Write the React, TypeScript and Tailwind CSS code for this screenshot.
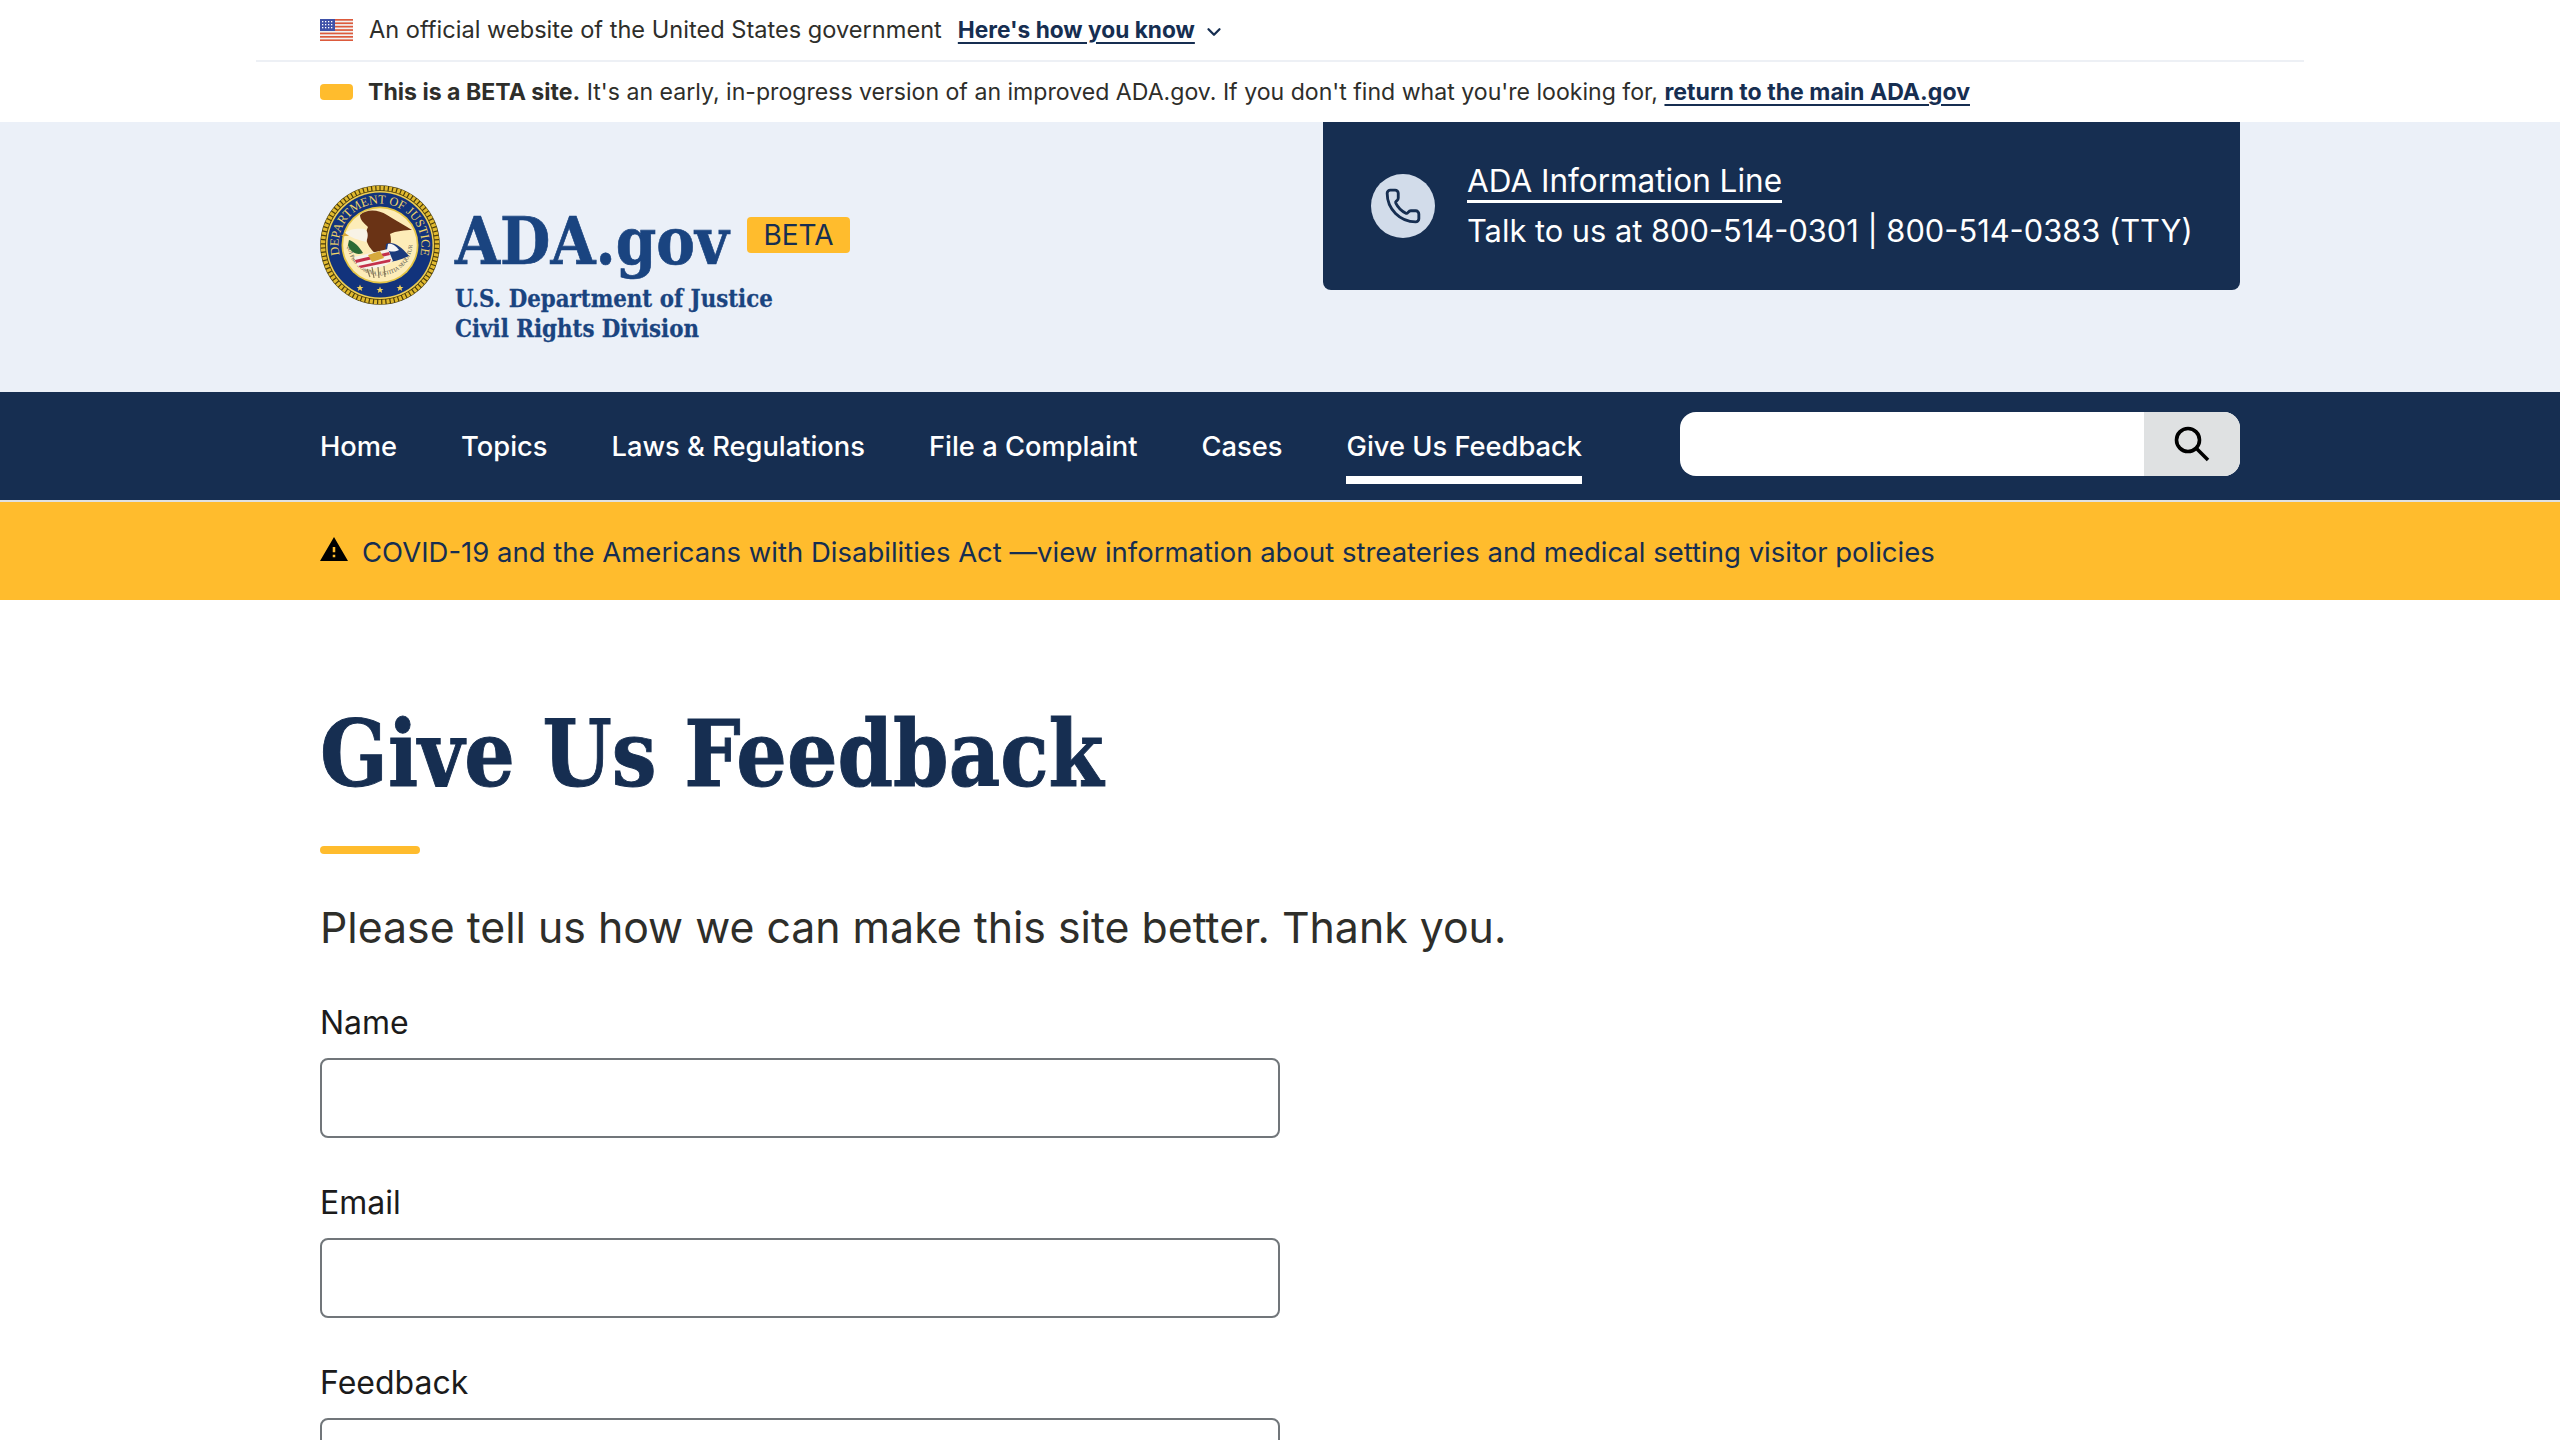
import React from 'react';
import { ChevronDown, Phone } from 'lucide-react';

const sans = "font-['Inter','Liberation_Sans',sans-serif]";

const navItems = ['Home', 'Topics', 'Laws & Regulations', 'File a Complaint', 'Cases', 'Give Us Feedback'];

const Flag = () => (
    <svg width="33" height="22" viewBox="0 0 33 22" className="shrink-0">
        <rect width="33" height="22" fill="#f2f2f2" />
        {[0, 3.4, 6.8, 10.2, 13.6, 17, 20.4].map((y) => (
            <rect key={y} y={y} width="33" height="1.7" fill="#dc5a3c" />
        ))}
        <rect width="15" height="12" fill="#3f51a8" />
        {[2, 5, 8, 11].map((x) => [2, 5, 8].map((y) => <rect key={`${x}-${y}`} x={x} y={y} width="1.3" height="1.3" fill="#fff" />))}
    </svg>
);

const Seal = () => (
    <svg width="120" height="120" viewBox="0 0 120 120" className="shrink-0">
        <defs>
            <path id="sealTop" d="M 19.7 70 A 41.5 41.5 0 1 1 100.3 70" />
            <path id="sealBottom" d="M 27.5 58 A 32.5 32.5 0 0 0 92.5 58" />
        </defs>
        <circle cx="60" cy="60" r="59.8" fill="#4a3d0c" />
        <circle cx="60" cy="60" r="57" fill="none" stroke="#e0b92f" strokeWidth="4.4" strokeDasharray="3 1.2" />
        <circle cx="60" cy="60" r="54" fill="#f0cf52" />
        <circle cx="60" cy="60" r="52.5" fill="#12337c" />
        <circle cx="60" cy="60" r="38.5" fill="#e3c445" />
        <circle cx="60" cy="60" r="36.8" fill="#fdecb8" />
        <text fontFamily="Liberation Serif, serif" fontSize="12.5" fill="#f0d468">
            <textPath href="#sealTop" startOffset="50%" textAnchor="middle" textLength="150" lengthAdjust="spacingAndGlyphs">DEPARTMENT OF JUSTICE</textPath>
        </text>
        <text fontFamily="Liberation Serif, serif" fontSize="5.6" fill="#4b4a44">
            <textPath href="#sealBottom" startOffset="50%" textAnchor="middle" textLength="98" lengthAdjust="spacingAndGlyphs">QUI PRO DOMINA JUSTITIA SEQUITUR</textPath>
        </text>
        {/* eagle */}
        <path d="M40 30 C46 24 58 24 67 30 C75 35 84 40 92 45 C85 45 76 46 70 49 C72 55 71 66 65 73 C57 71 50 65 47 57 C45 51 46 46 48 42 C44 38 40 35 40 30 Z" fill="#6a3315" />
        <path d="M25 48 C29 44 37 43 45 44 C49 47 48 53 46 57 C39 55 31 53 25 48 Z" fill="#f8f3e6" />
        <path d="M25 48 L21 51 L29 51 Z" fill="#d8a63a" />
        <path d="M66 59 C72 56 80 60 89 71 C80 75 72 77 64 78 Z" fill="#1b3a7c" />
        <path d="M68 59 C72 58 76 61 79 65 C74 67 71 67 67 65 Z" fill="#f6f6f6" />
        {/* olive branch and shield */}
        <path d="M29 55 C33 56 39 61 43 68 C37 71 30 67 28 60 Z" fill="#2c6a34" />
        <path d="M34 72 L68 64 L73 76 C62 84 46 86 38 82 Z" fill="#f6f2ea" />
        <path d="M35 75 L69 67 L70 70 L36 78 Z M38 81 L71 74 L70 77 L41 83 Z" fill="#c4304a" />
        <path d="M48 70 L60 66 L64 73 L52 77 Z" fill="#d7a93c" />
        <path d="M52 82 L54 93 M58 82 L59 93 M64 81 L65 92 M47 84 L50 92" stroke="#8a7a5a" strokeWidth="1.2" fill="none" />
        {[[40, 103], [60, 105], [80, 103]].map(([x, y]) => (
            <polygon key={x} points={`${x},${y - 3.4} ${x + 1},${y - 1} ${x + 3.4},${y - 1} ${x + 1.5},${y + 0.5} ${x + 2.2},${y + 3} ${x},${y + 1.5} ${x - 2.2},${y + 3} ${x - 1.5},${y + 0.5} ${x - 3.4},${y - 1} ${x - 1},${y - 1}`} fill="#f3d35a" />
        ))}
    </svg>
);

const Field = ({ label, tall }: { label: string; tall?: boolean }) => (
    <div className="mb-[44px]">
        <label className="block text-[32px] leading-[40px] text-[#1b1b1b] h-[56px] pt-[1px]">{label}</label>
        {tall ? (
            <textarea className="block w-[960px] h-[300px] border-2 border-[#71767a] rounded-lg bg-white" />
        ) : (
            <input type="text" className="block w-[960px] h-[80px] border-2 border-[#71767a] rounded-lg bg-white" />
        )}
    </div>
);

export default function App() {
    return (
        <div className={`${sans} h-screen overflow-hidden bg-white text-[#2e2e2a]`}>
            {/* gov banner */}
            <div className="mx-auto w-[2048px] h-[62px] border-b-2 border-[#edf0f5] px-16 flex items-center gap-4 text-[23.6px]">
                <Flag />
                <span className="whitespace-nowrap">An official website of the United States government</span>
                <a className="font-bold text-[22.7px] text-[#162e51] underline underline-offset-4 whitespace-nowrap">Here's how you know</a>
                <ChevronDown size={22} strokeWidth={2.5} className="text-[#162e51] mt-1 -ml-2" />
            </div>
            <div className="mx-auto w-[2048px] h-[60px] px-16 flex items-center gap-[15px] text-[23.1px]">
                <span className="w-[33px] h-4 rounded bg-[#ffbc2d] shrink-0" />
                <span className="whitespace-nowrap">
                    <b className="font-bold">This is a BETA site.</b> It's an early, in-progress version of an improved ADA.gov. If you don't find what you're looking for,{' '}
                    <a className="font-bold text-[#162e51] underline underline-offset-4">return to the main ADA.gov</a>
                </span>
            </div>

            {/* header */}
            <header className="bg-[#ebf0f8] h-[270px]">
                <div className="mx-auto w-[1920px] flex justify-between items-start">
                    <div className="flex items-start gap-[15px] pt-[63px]">
                        <Seal />
                        <div className="font-['DejaVu_Serif',serif] font-bold text-[#1a4480] mt-[20px]">
                            <div className="flex items-start gap-[15px]">
                                <span className="block w-[277px] text-[66px] leading-[72px] whitespace-nowrap origin-left scale-x-[0.88] [-webkit-text-stroke:0.7px_#1a4480]">ADA.gov</span>
                                <span className={`${sans} font-normal mt-[12px] h-9 w-[103px] rounded bg-[#ffbc2d] text-[#162e51] text-[28px] leading-9 text-center`}>BETA</span>
                            </div>
                            <div className="text-[24px] leading-[30px] mt-[7px] whitespace-nowrap origin-left scale-x-[0.89] [-webkit-text-stroke:0.3px_#1a4480]">
                                U.S. Department of Justice
                                <br />
                                Civil Rights Division
                            </div>
                        </div>
                    </div>
                    <div className="w-[917px] h-[168px] bg-[#162e51] rounded-b-lg flex items-center pl-[48px] gap-[32px] text-white">
                        <span className="w-16 h-16 rounded-full bg-[#d2dcea] flex items-center justify-center shrink-0">
                            <Phone size={38} strokeWidth={1.8} className="text-[#162e51]" />
                        </span>
                        <div className="text-[31.5px] leading-[50px] whitespace-nowrap">
                            <a className="inline-block leading-[38px] border-b-[3px] border-white">ADA Information Line</a>
                            <div className="text-[30.8px]">Talk to us at 800-514-0301 | 800-514-0383 (TTY)</div>
                        </div>
                    </div>
                </div>
            </header>

            {/* nav */}
            <nav className="bg-[#162e51] h-[110px] border-b-2 border-[#dfe1e2]">
                <div className="mx-auto w-[1920px] h-full flex items-start justify-between">
                    <ul className="flex gap-16 text-white text-[27.3px] font-medium">
                        {navItems.map((item) => (
                            <li key={item} className={`h-[92px] pt-[35px] leading-[40px] whitespace-nowrap ${item === 'Give Us Feedback' ? 'border-b-8 border-white' : ''}`}>
                                {item}
                            </li>
                        ))}
                    </ul>
                    <div className="mt-5 w-[560px] h-16 rounded-2xl bg-white overflow-hidden flex justify-end">
                        <button type="button" className="w-24 h-full bg-[#dfe1e2] flex items-center justify-center">
                            <svg width="36" height="36" viewBox="0 0 36 36" fill="none" stroke="#000" strokeWidth="3.6">
                                <circle cx="14" cy="14" r="11.5" />
                                <path d="M22 22 L34 34" />
                            </svg>
                        </button>
                    </div>
                </div>
            </nav>

            {/* alert */}
            <div className="bg-[#ffbc2d] h-[98px]">
                <div className="mx-auto w-[1920px] h-full flex items-center gap-[14px] text-[#162e51] text-[27.5px] whitespace-nowrap">
                    <svg width="28" height="26" viewBox="1 2 22 19" className="shrink-0 -mt-1">
                        <path fill="#000" d="M1 21h22L12 2 1 21zm12-3h-2v-2h2v2zm0-4h-2v-4h2v4z" />
                    </svg>
                    <span className="mt-[3px]">COVID-19 and the Americans with Disabilities Act —view information about streateries and medical setting visitor policies</span>
                </div>
            </div>

            {/* content */}
            <main className="mx-auto w-[1920px] pt-[92px]">
                <h1 className="font-['DejaVu_Serif',serif] font-bold text-[#162e51] text-[92px] leading-[124px] whitespace-nowrap origin-left scale-x-[0.864] [-webkit-text-stroke:1px_#162e51]">Give Us Feedback</h1>
                <div className="mt-[30px] w-[100px] h-2 rounded-full bg-[#ffbc2d]" />
                <p className="mt-[44px] text-[42.8px] leading-[60px] text-[#2e2e2a]">Please tell us how we can make this site better. Thank you.</p>
                <form className="mt-[44px]">
                    <Field label="Name" />
                    <Field label="Email" />
                    <Field label="Feedback" tall />
                </form>
            </main>
        </div>
    );
}
